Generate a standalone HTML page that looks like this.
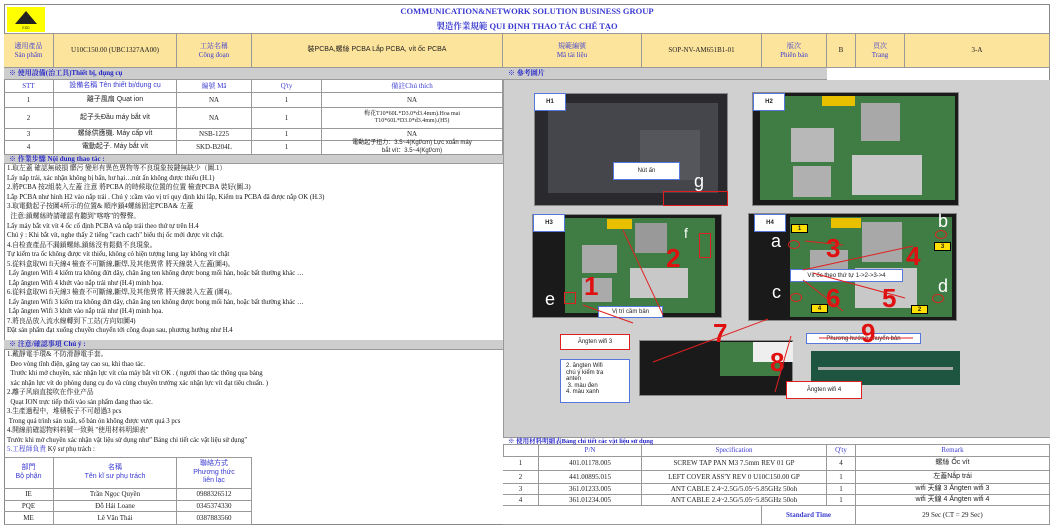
<!DOCTYPE html>
<html><head><meta charset="utf-8"><style>
*{margin:0;padding:0;box-sizing:border-box}
body{width:1053px;height:529px;background:#fff;position:relative;overflow:hidden;font-family:"Liberation Serif","Noto Serif CJK SC",serif;font-size:7px;color:#222}
.a{position:absolute}
.c{position:absolute;display:flex;align-items:center;justify-content:center;text-align:center;border-right:1px solid #999;border-bottom:1px solid #999;line-height:1.25}
.y{background:#fde49c}
.b{color:#3a3ad0}
.s{font-family:"Liberation Sans","Noto Sans CJK SC",sans-serif}
.g{background:#d0d0d0}
.bar{position:absolute;background:#cdcdcd;color:#2424c8;font-weight:bold;font-size:7px;padding-left:5px;line-height:10px;border-bottom:1px solid #999}
.ln{position:absolute;left:7px;font-size:6.8px;white-space:nowrap;line-height:9.6px;color:#111}
.ph{position:absolute;background:#1a1a1a;border:1px solid #888}
.pcb{position:absolute;background:#3f7d45}
.lbl{position:absolute;background:#fff;border:1px solid #5577dd;font:bold 6px "Liberation Sans",sans-serif;display:flex;align-items:center;justify-content:center;color:#222}
.rn{position:absolute;color:#e01010;font:bold 26px "Liberation Sans",sans-serif;line-height:1}
.wn{position:absolute;color:#fff;font:18px "Liberation Sans",sans-serif;line-height:1}
.rb{position:absolute;border:1px solid #e02020}
.note{position:absolute;background:#fff;border:1px solid #e02020;font:6px "Liberation Sans",sans-serif;display:flex;align-items:center;justify-content:center}
</style></head><body>
<div class="a" style="left:4px;top:4px;width:1046px;height:521px;border:1px solid #888"></div>
<div class="a" style="left:7px;top:7px;width:38px;height:25px;background:#ffff00"></div>
<svg class="a" style="left:10px;top:8px" width="32" height="22"><polygon points="16,3 27,16 5,16" fill="#222"/><text x="16" y="21" font-size="3.5" text-anchor="middle" fill="#222" font-family="Liberation Sans">ESD</text></svg>
<div class="a b" style="left:360px;top:6px;width:334px;text-align:center;font-weight:bold;font-size:8.5px">COMMUNICATION&amp;NETWORK SOLUTION BUSINESS GROUP</div>
<div class="a b" style="left:360px;top:20px;width:334px;text-align:center;font-weight:bold;font-size:8.5px">製造作業規範 QUI ĐỊNH THAO TÁC CHẾ TẠO</div>
<div class="c y b" style="left:4px;top:33px;width:50px;height:35px;border-top:1px solid #999">適用產品<br>Sản phẩm</div>
<div class="c y" style="left:54px;top:33px;width:123px;height:35px;border-top:1px solid #999">U10C150.00 (UBC1327AA00)</div>
<div class="c y b" style="left:177px;top:33px;width:75px;height:35px;border-top:1px solid #999">工站名稱<br>Công đoạn</div>
<div class="c y s" style="left:252px;top:33px;width:251px;height:35px;border-top:1px solid #999">裝PCBA,螺絲 PCBA Lắp PCBA, vít ốc PCBA</div>
<div class="c y b" style="left:503px;top:33px;width:139px;height:35px;border-top:1px solid #999">規範編號<br>Mã tài liệu</div>
<div class="c y" style="left:642px;top:33px;width:120px;height:35px;border-top:1px solid #999">SOP-NV-AM651B1-01</div>
<div class="c y b" style="left:762px;top:33px;width:65px;height:35px;border-top:1px solid #999">版次<br>Phiên bản</div>
<div class="c y" style="left:827px;top:33px;width:29px;height:35px;border-top:1px solid #999">B</div>
<div class="c y b" style="left:856px;top:33px;width:49px;height:35px;border-top:1px solid #999">頁次<br>Trang</div>
<div class="c y" style="left:905px;top:33px;width:145px;height:35px;border-top:1px solid #999">3-A</div>
<div class="bar" style="left:4px;top:68px;width:499px;height:12px">※ 使用設備(治工具)Thiết bị, dụng cụ</div>
<div class="bar" style="left:503px;top:68px;width:324px;height:12px">※ 參考圖片</div>
<div class="c b" style="left:4px;top:80px;width:50px;height:13px">STT</div>
<div class="c b s" style="left:54px;top:80px;width:123px;height:13px">設備名稱 Tên thiết bị/dụng cụ</div>
<div class="c b" style="left:177px;top:80px;width:75px;height:13px">編號 Mã</div>
<div class="c b" style="left:252px;top:80px;width:70px;height:13px">Q'ty</div>
<div class="c b" style="left:322px;top:80px;width:181px;height:13px">備註Chú thích</div>
<div class="c" style="left:4px;top:93px;width:50px;height:15px">1</div><div class="c s" style="left:54px;top:93px;width:123px;height:15px">離子風扇 Quạt ion</div><div class="c" style="left:177px;top:93px;width:75px;height:15px">NA</div><div class="c" style="left:252px;top:93px;width:70px;height:15px">1</div><div class="c" style="left:322px;top:93px;width:181px;height:15px">NA</div>
<div class="c" style="left:4px;top:108px;width:50px;height:21px">2</div><div class="c s" style="left:54px;top:108px;width:123px;height:21px">起子头Đầu máy bắt vít</div><div class="c" style="left:177px;top:108px;width:75px;height:21px">NA</div><div class="c" style="left:252px;top:108px;width:70px;height:21px">1</div><div class="c" style="left:322px;top:108px;width:181px;height:21px;font-size:6px">梅花T10*60L*D3.0*d3.4mm).Hoa mai<br>T10*60L*D3.0*d3.4mm).(H5)</div>
<div class="c" style="left:4px;top:129px;width:50px;height:12px">3</div><div class="c s" style="left:54px;top:129px;width:123px;height:12px">螺絲供應機. Máy cấp vít</div><div class="c" style="left:177px;top:129px;width:75px;height:12px">NSB-1225</div><div class="c" style="left:252px;top:129px;width:70px;height:12px">1</div><div class="c" style="left:322px;top:129px;width:181px;height:12px">NA</div>
<div class="c" style="left:4px;top:141px;width:50px;height:14px">4</div><div class="c s" style="left:54px;top:141px;width:123px;height:14px">電動起子. Máy bắt vít</div><div class="c" style="left:177px;top:141px;width:75px;height:14px">SKD-B204L</div><div class="c" style="left:252px;top:141px;width:70px;height:14px">1</div><div class="c s" style="left:322px;top:141px;width:181px;height:14px;font-size:6px">電動起子扭力：3.5~4(Kgf/cm) Lực xoắn máy<br>bắt vít：3.5~4(Kgf/cm)</div>
<div class="bar" style="left:4px;top:155px;width:499px;height:9px;line-height:8px">※ 作業步驟 Nội dung thao tác :</div>
<div class="ln" style="top:164px">1.取左蓋 確認無破損 髒污 變形有異色異物等不良現象按鍵無缺少（圖.1）</div>
<div class="ln" style="top:174px">Lấy nắp trái, xác nhận không bị bẩn, hư hại…nút ấn không được thiếu (H.1)</div>
<div class="ln" style="top:183px">2.將PCBA 按2組裝入左蓋 注意 將PCBA 的時候取位置的位置 檢查PCBA 裝好(圖.3)</div>
<div class="ln" style="top:193px">Lắp PCBA như hình H2 vào nắp trái . Chú ý :cầm vào vị trí quy định khi lắp, Kiểm tra PCBA đã được nắp OK (H.3)</div>
<div class="ln" style="top:202px">3.取電動起子按圖4所示的位置&amp; 順序鎖4螺絲固定PCBA&amp; 左蓋</div>
<div class="ln" style="top:212px">&nbsp;&nbsp;注意:鎖螺絲時請確認有聽到"喀喀"的聲聲。</div>
<div class="ln" style="top:222px">Lấy máy bắt vít vít 4 ốc cố định PCBA và nắp trái theo thứ tự trên H.4</div>
<div class="ln" style="top:231px">Chú ý : Khi bắt vít, nghe thấy 2 tiếng "cach cach" biểu thị ốc mới được vít chặt.</div>
<div class="ln" style="top:241px">4.自检查產品不漏鎖螺絲,鎖絲沒有鬆動不良現象。</div>
<div class="ln" style="top:250px">Tự kiểm tra ốc không được vít thiếu, không có hiện tượng lung lay không vít chặt</div>
<div class="ln" style="top:260px">5.從料盒取Wi fi天線4 檢查不可斷線,斷焊,及其他異常 將天線裝入左蓋(圖4)。</div>
<div class="ln" style="top:269px">&nbsp;Lấy ăngten Wifi 4 kiểm tra không đứt dây, chân ăng ten không được bong mối hàn, hoặc bất thường khác …</div>
<div class="ln" style="top:279px">&nbsp;Lắp ăngten Wifi 4 khứt vào nắp trái như (H.4) minh họa.</div>
<div class="ln" style="top:288px">6.從料盒取Wi fi天線3 檢查不可斷線,斷焊,及其他異常 將天線裝入左蓋 (圖4)。</div>
<div class="ln" style="top:298px">&nbsp;Lấy ăngten Wifi 3 kiểm tra không đứt dây, chân ăng ten không được bong mối hàn, hoặc bất thường khác …</div>
<div class="ln" style="top:307px">&nbsp;Lắp ăngten Wifi 3 khứt vào nắp trái như (H.4) minh họa.</div>
<div class="ln" style="top:317px">7.將良品放入流水線轉到下工站(方向如圖4)</div>
<div class="ln" style="top:326px">Đặt sản phẩm đạt xuống chuyền chuyển tới công đoạn sau, phương hướng như H.4</div>
<div class="bar" style="left:4px;top:340px;width:499px;height:10px;line-height:9px">※ 注意/確認事項 Chú ý :</div>
<div class="ln" style="top:350px">1.戴靜電手環&amp; 不防滑靜電手套。</div>
<div class="ln" style="top:360px">&nbsp;&nbsp;Đeo vòng tĩnh điện, găng tay cao su, khi thao tác.</div>
<div class="ln" style="top:369px">&nbsp;&nbsp;Trước khi mở chuyền, xác nhận lực vít của máy bắt vít OK . ( người thao tác thông qua bảng</div>
<div class="ln" style="top:379px">&nbsp;&nbsp;xác nhận lực vít do phòng dụng cụ đo và cùng chuyền trưởng xác nhận lực vít đạt tiêu chuẩn. )</div>
<div class="ln" style="top:388px">2.離子风扇直接吹在作业产品</div>
<div class="ln" style="top:398px">&nbsp;&nbsp;Quạt ION trực tiếp thổi vào sản phẩm đang thao tác.</div>
<div class="ln b" style="top:407px">3.生產過程中，堆積板子不可超過3 pcs</div>
<div class="ln b" style="top:417px">&nbsp;Trong quá trình sản xuất, số bản ón không được vượt quá 3 pcs</div>
<div class="ln b" style="top:426px">4.開線前確認物料料號一致與 "使用材料明細表"</div>
<div class="ln b" style="top:436px">Trước khi mở chuyền xác nhận vật liệu sử dụng như" Bảng chi tiết các vật liệu sử dụng"</div>
<div class="ln" style="top:445px"><span class="b">5.工程師負責</span> Kỹ sư phụ trách :</div>
<div class="c b s" style="left:4px;top:457px;width:50px;height:32px;border-top:1px solid #999">部門<br>Bộ phận</div>
<div class="c b s" style="left:54px;top:457px;width:123px;height:32px;border-top:1px solid #999">名稱<br>Tên kĩ sư phụ trách</div>
<div class="c b s" style="left:177px;top:457px;width:75px;height:32px;border-top:1px solid #999">聯絡方式<br>Phương thức<br>liên lạc</div>
<div class="c" style="left:4px;top:489px;width:50px;height:12px">IE</div><div class="c" style="left:54px;top:489px;width:123px;height:12px">Trần Ngọc Quyền</div><div class="c" style="left:177px;top:489px;width:75px;height:12px">0988326512</div>
<div class="c" style="left:4px;top:501px;width:50px;height:11px">PQE</div><div class="c" style="left:54px;top:501px;width:123px;height:11px">Đỗ Hải Loane</div><div class="c" style="left:177px;top:501px;width:75px;height:11px">0345374330</div>
<div class="c" style="left:4px;top:512px;width:50px;height:13px">ME</div><div class="c" style="left:54px;top:512px;width:123px;height:13px">Lê Văn Thái</div><div class="c" style="left:177px;top:512px;width:75px;height:13px">0387883560</div>
<div class="a g" style="left:503px;top:80px;width:547px;height:357px;border-left:1px solid #999"></div>
<div class="ph" style="left:534px;top:93px;width:194px;height:113px;background:#2a2a2e"></div>
<div class="a" style="left:548px;top:103px;width:170px;height:90px;background:#45454c"></div>
<div class="a" style="left:640px;top:130px;width:60px;height:50px;background:#55555c"></div>
<div class="lbl" style="left:534px;top:93px;width:32px;height:18px">H1</div>
<div class="lbl" style="left:613px;top:162px;width:67px;height:18px;font-weight:normal">Nút ấn</div>
<div class="rb" style="left:663px;top:191px;width:65px;height:15px"></div>
<div class="wn" style="left:694px;top:172px">g</div>
<div class="ph" style="left:752px;top:92px;width:207px;height:114px"></div>
<div class="pcb" style="left:760px;top:96px;width:195px;height:104px"></div>
<div class="a" style="left:791px;top:128px;width:43px;height:34px;background:#b8b8b8"></div>
<div class="a" style="left:861px;top:103px;width:39px;height:38px;background:#a8a8a8"></div>
<div class="a" style="left:852px;top:155px;width:70px;height:40px;background:#c8c8c8"></div>
<div class="a" style="left:793px;top:166px;width:38px;height:31px;background:#b0b0b0"></div>
<div class="a" style="left:822px;top:96px;width:33px;height:10px;background:#e8c000"></div>
<div class="lbl" style="left:753px;top:93px;width:32px;height:18px">H2</div>
<div class="ph" style="left:532px;top:214px;width:190px;height:104px"></div>
<div class="pcb" style="left:565px;top:218px;width:150px;height:95px"></div>
<div class="a" style="left:582px;top:245px;width:35px;height:28px;background:#aaa"></div>
<div class="a" style="left:635px;top:223px;width:32px;height:30px;background:#999"></div>
<div class="a" style="left:630px;top:268px;width:58px;height:30px;background:#c8c8c8"></div>
<div class="a" style="left:582px;top:278px;width:30px;height:24px;background:#aaa"></div>
<div class="a" style="left:607px;top:219px;width:25px;height:10px;background:#e8c000"></div>
<div class="lbl" style="left:533px;top:214px;width:32px;height:18px">H3</div>
<div class="rn" style="left:584px;top:273px">1</div>
<div class="rn" style="left:666px;top:245px">2</div>
<div class="wn" style="left:545px;top:290px">e</div>
<div class="wn" style="left:684px;top:226px;font-size:14px">f</div>
<div class="rb" style="left:564px;top:292px;width:12px;height:12px"></div>
<div class="rb" style="left:699px;top:233px;width:12px;height:25px"></div>
<div class="lbl" style="left:598px;top:306px;width:65px;height:12px;font-weight:normal">Vị trí cầm bản</div>
<div class="ph" style="left:748px;top:213px;width:209px;height:108px"></div>
<div class="pcb" style="left:790px;top:217px;width:162px;height:100px"></div>
<div class="a" style="left:862px;top:222px;width:40px;height:40px;background:#a8a8a8"></div>
<div class="a" style="left:855px;top:268px;width:62px;height:40px;background:#c8c8c8"></div>
<div class="a" style="left:810px;top:250px;width:38px;height:30px;background:#aaa"></div>
<div class="a" style="left:831px;top:218px;width:30px;height:10px;background:#e8c000"></div>
<div class="lbl" style="left:754px;top:214px;width:32px;height:18px">H4</div>
<div class="lbl" style="left:791px;top:224px;width:17px;height:9px;background:#ffe000;border-color:#000">1</div>
<div class="lbl" style="left:934px;top:242px;width:17px;height:9px;background:#ffe000;border-color:#000">3</div>
<div class="lbl" style="left:811px;top:304px;width:17px;height:9px;background:#ffe000;border-color:#000">4</div>
<div class="lbl" style="left:911px;top:305px;width:17px;height:9px;background:#ffe000;border-color:#000">2</div>
<div class="rn" style="left:826px;top:235px">3</div>
<div class="rn" style="left:906px;top:243px">4</div>
<div class="rn" style="left:826px;top:285px">6</div>
<div class="rn" style="left:882px;top:285px">5</div>
<div class="wn" style="left:771px;top:232px">a</div>
<div class="wn" style="left:938px;top:212px">b</div>
<div class="wn" style="left:772px;top:283px">c</div>
<div class="wn" style="left:938px;top:277px">d</div>
<div class="a" style="left:788px;top:240px;width:12px;height:9px;border:1px solid #e02020;border-radius:50%"></div>
<div class="a" style="left:935px;top:230px;width:12px;height:9px;border:1px solid #e02020;border-radius:50%"></div>
<div class="a" style="left:790px;top:293px;width:12px;height:9px;border:1px solid #e02020;border-radius:50%"></div>
<div class="a" style="left:932px;top:294px;width:12px;height:9px;border:1px solid #e02020;border-radius:50%"></div>
<div class="lbl" style="left:790px;top:269px;width:113px;height:13px;font-weight:normal">Vít ốc theo thứ tự 1-&gt;2-&gt;3-&gt;4</div>
<div class="ph" style="left:639px;top:340px;width:154px;height:56px"></div>
<div class="pcb" style="left:720px;top:342px;width:60px;height:34px"></div>
<div class="a" style="left:753px;top:342px;width:40px;height:20px;background:#eee"></div>
<div class="a" style="left:811px;top:351px;width:149px;height:34px;background:#1e5540"></div>
<div class="a" style="left:818px;top:367px;width:135px;height:3px;background:#aaa"></div>
<div class="note" style="left:560px;top:334px;width:70px;height:16px">Ăngten wifi 3</div>
<div class="lbl" style="left:560px;top:359px;width:70px;height:44px;font-weight:normal;justify-content:flex-start;align-items:flex-start;padding:3px 5px;line-height:1.1">2. ăngten Wifi<br>chú ý kiểm tra<br>anten<br>&nbsp;3. màu đen<br>4. màu xanh</div>
<div class="note" style="left:786px;top:381px;width:76px;height:18px">Ăngten wifi 4</div>
<div class="lbl" style="left:806px;top:333px;width:115px;height:11px;font-weight:normal">Phương hướng chuyển bản</div>
<div class="rn" style="left:713px;top:320px">7</div>
<div class="rn" style="left:770px;top:349px">8</div>
<div class="rn" style="left:861px;top:320px">9</div>
<svg class="a" style="left:503px;top:80px" width="547" height="357"><g stroke="#e02020" stroke-width="1" fill="none">
<line x1="160" y1="235" x2="120" y2="150"/><line x1="130" y1="243" x2="80" y2="225"/>
<line x1="300" y1="190" x2="410" y2="166"/><line x1="310" y1="193" x2="402" y2="218"/><line x1="300" y1="200" x2="340" y2="231"/><line x1="340" y1="165" x2="302" y2="161"/>
<line x1="265" y1="239" x2="150" y2="282"/><line x1="288" y1="256" x2="272" y2="312"/><line x1="316" y1="258" x2="410" y2="258"/></g></svg>
<div class="bar" style="left:503px;top:437px;width:547px;height:8px;line-height:8px;background:#fff;font-size:6.5px;border-top:1px solid #999">※ 使用材料明細表Bảng chi tiết các vật liệu sử dụng</div>
<div class="c" style="left:503px;top:445px;width:36px;height:12px;border-left:1px solid #999"></div>
<div class="c b" style="left:539px;top:445px;width:103px;height:12px">P/N</div>
<div class="c b" style="left:642px;top:445px;width:185px;height:12px">Specification</div>
<div class="c b" style="left:827px;top:445px;width:29px;height:12px">Q'ty</div>
<div class="c b" style="left:856px;top:445px;width:194px;height:12px">Remark</div>
<div class="c" style="left:503px;top:457px;width:36px;height:14px">1</div><div class="c" style="left:539px;top:457px;width:103px;height:14px">401.01178.005</div><div class="c" style="left:642px;top:457px;width:185px;height:14px">SCREW TAP PAN M3 7.5mm REV 01 GP</div><div class="c" style="left:827px;top:457px;width:29px;height:14px">4</div><div class="c s" style="left:856px;top:457px;width:194px;height:14px">螺絲 Ốc vít</div>
<div class="c" style="left:503px;top:471px;width:36px;height:13px">2</div><div class="c" style="left:539px;top:471px;width:103px;height:13px">441.00895.015</div><div class="c" style="left:642px;top:471px;width:185px;height:13px">LEFT COVER ASS'Y REV 0 U10C150.00 GP</div><div class="c" style="left:827px;top:471px;width:29px;height:13px">1</div><div class="c s" style="left:856px;top:471px;width:194px;height:13px">左蓋Nắp trái</div>
<div class="c" style="left:503px;top:484px;width:36px;height:11px">3</div><div class="c" style="left:539px;top:484px;width:103px;height:11px">361.01233.005</div><div class="c" style="left:642px;top:484px;width:185px;height:11px">ANT CABLE 2.4~2.5G/5.05~5.85GHz 50oh</div><div class="c" style="left:827px;top:484px;width:29px;height:11px">1</div><div class="c s" style="left:856px;top:484px;width:194px;height:11px">wifi 天線 3 Ăngten wifi 3</div>
<div class="c" style="left:503px;top:495px;width:36px;height:11px">4</div><div class="c" style="left:539px;top:495px;width:103px;height:11px">361.01234.005</div><div class="c" style="left:642px;top:495px;width:185px;height:11px">ANT CABLE 2.4~2.5G/5.05~5.85GHz 50oh</div><div class="c" style="left:827px;top:495px;width:29px;height:11px">1</div><div class="c s" style="left:856px;top:495px;width:194px;height:11px">wifi 天線 4 Ăngten wifi 4</div>
<div class="c" style="left:503px;top:506px;width:259px;height:19px"></div>
<div class="c b" style="left:762px;top:506px;width:94px;height:19px;font-weight:bold">Standard Time</div>
<div class="c" style="left:856px;top:506px;width:194px;height:19px">29 Sec (CT = 29 Sec)</div>
</body></html>
